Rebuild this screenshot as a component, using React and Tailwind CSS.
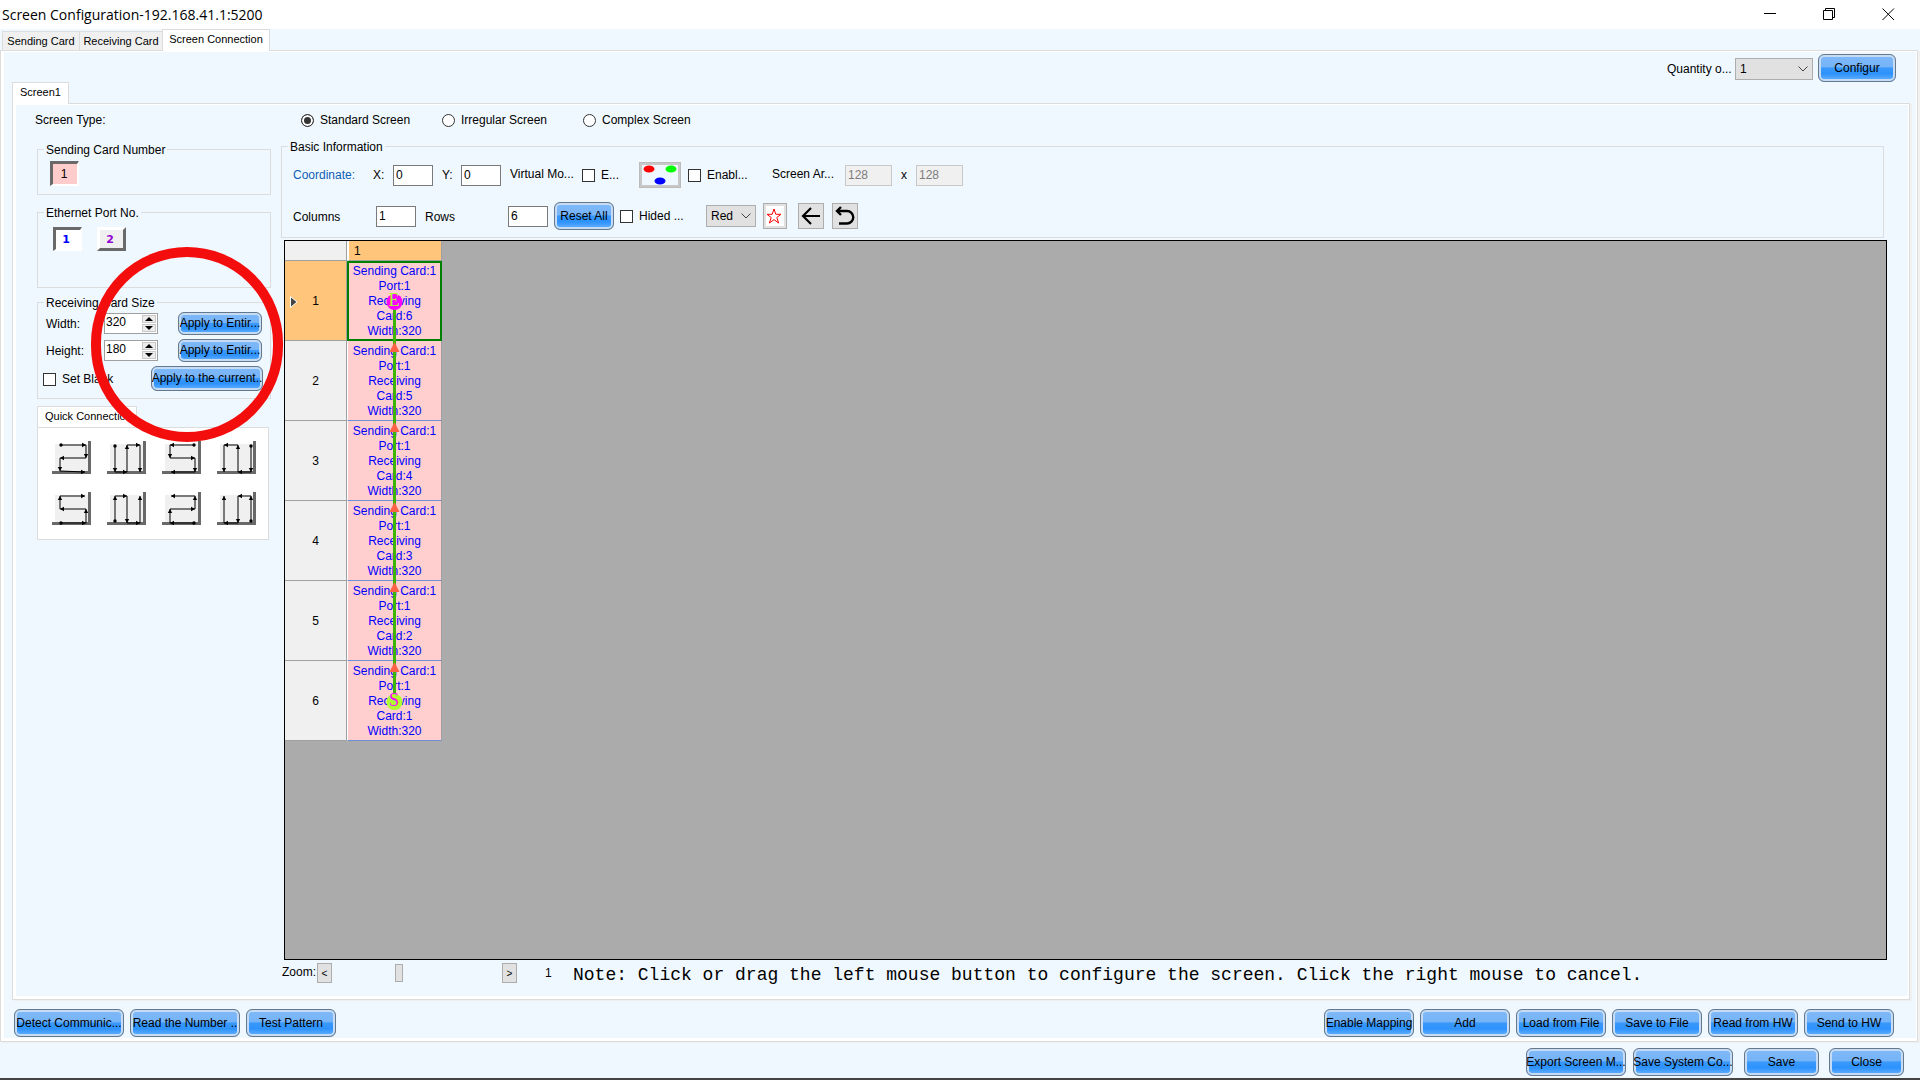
import React, { useState } from "react";
import { clsx } from "clsx";

const receivingCards = [6, 5, 4, 3, 2, 1];

// Each route starts at the dot, every following point ends in an arrow head
const quickRoutes = [
  { name: "Right, then down", points: [[9, 4], [34, 4], [34, 17], [8, 17], [8, 30], [33, 31]] },
  { name: "Down, then right", points: [[8, 5], [8, 31], [20, 31], [20, 4], [33, 4], [33, 31]] },
  { name: "Left, then down", points: [[32, 4], [8, 4], [8, 17], [33, 17], [33, 31], [9, 31]] },
  { name: "Down, then left", points: [[34, 5], [34, 31], [21, 31], [21, 4], [7, 4], [7, 31]] },
  { name: "Right, then up", points: [[9, 31], [34, 31], [34, 17], [8, 17], [8, 4], [33, 4]] },
  { name: "Up, then right", points: [[8, 29], [8, 4], [20, 4], [20, 31], [33, 31], [33, 4]] },
  { name: "Left, then up", points: [[32, 31], [8, 31], [8, 17], [33, 17], [33, 4], [9, 4]] },
  { name: "Up, then left", points: [[34, 29], [34, 4], [21, 4], [21, 31], [7, 31], [7, 4]] },
];

const GlossButton = ({ className, children }) => (
  <button
    type="button"
    className={clsx(
      "shrink-0 flex items-center justify-center overflow-hidden whitespace-nowrap rounded-[6px] border border-[#66788c] bg-[linear-gradient(#7fb9f8_0%,#76b4f8_45%,#3a99fb_50%,#2d92fd_72%,#6ab3ff_100%)] shadow-[inset_0_0_0_2px_#c6dcf4] text-black",
      className
    )}
  >
    {children}
  </button>
);

const TextBox = ({ className, ...props }) => (
  <input
    type="text"
    className={clsx(
      "h-[21px] shrink-0 border border-[#7a7a7a] bg-white px-[2px] pb-px text-[12px] text-black disabled:border-[#c8c8c8] disabled:bg-[#f0f0f0] disabled:text-[#7c7c7c]",
      className
    )}
    {...props}
  />
);

const CheckBox = ({ label, className }) => (
  <label className={clsx("flex shrink-0 items-center gap-[6px]", className)}>
    <input type="checkbox" className="size-[13px] shrink-0 appearance-none border border-[#333] bg-white checked:bg-[#333]" />
    {label}
  </label>
);

const Select = ({ className, options, ...props }) => (
  <div className={clsx("relative h-[22px] shrink-0", className)}>
    <select className="h-full w-full appearance-none border border-[#adadad] bg-[#e1e1e1] pl-1 text-[12px] text-black" {...props}>
      {options.map((o) => (
        <option key={o}>{o}</option>
      ))}
    </select>
    <svg className="pointer-events-none absolute right-[5px] top-2" width="10" height="6" viewBox="0 0 10 6" fill="none" stroke="#444">
      <path d="M0.5 0.5 L5 5 L9.5 0.5" />
    </svg>
  </div>
);

const Group = ({ title, className, legendClass, children }) => (
  <fieldset className={clsx("min-w-0 border border-[#dcdcdc]", className)}>
    <legend className={clsx("h-4 px-[2px] leading-[18px]", legendClass)}>{title}</legend>
    {children}
  </fieldset>
);

const SizeField = ({ id, label, value }) => {
  const [size, setSize] = useState(value);
  return (
    <div className="flex items-center">
      <label htmlFor={id} className="w-[58px] pt-[2px]">{label}</label>
      <div className="flex h-[21px] w-[54px] border border-[#a0a0a0] bg-white">
        <input
          id={id}
          type="text"
          value={size}
          onChange={(e) => setSize(Number(e.target.value) || 0)}
          className="w-[37px] pb-[2px] pl-[1px] text-[12px]"
        />
        <div className="flex flex-1 flex-col gap-px py-px pr-px">
          <button type="button" aria-label={`Increase ${label}`} onClick={() => setSize(size + 1)} className="flex flex-1 items-center justify-center border border-[#c8c8c8] bg-[#ececec]">
            <svg className="shrink-0" width="8" height="4" viewBox="0 0 8 4"><path d="M0 4 L4 0 L8 4Z" /></svg>
          </button>
          <button type="button" aria-label={`Decrease ${label}`} onClick={() => setSize(size - 1)} className="flex flex-1 items-center justify-center border border-[#c8c8c8] bg-[#ececec]">
            <svg className="shrink-0" width="8" height="4" viewBox="0 0 8 4"><path d="M0 0 L4 4 L8 0Z" /></svg>
          </button>
        </div>
      </div>
      <GlossButton className="ml-5 h-[23px] w-[84px]">Apply to Entir...</GlossButton>
    </div>
  );
};

const RouteIcon = ({ points }) => {
  const arrows = points.slice(1).map(([x, y], i) => {
    const [px, py] = points[i];
    const dx = Math.sign(x - px);
    const dy = Math.abs(x - px) > Math.abs(y - py) ? 0 : Math.sign(y - py);
    const angle = dy === 0 ? (dx > 0 ? 0 : 180) : dy > 0 ? 90 : 270;
    return <path key={i} d="M0 0 L-4 -2.2 L-4 2.2Z" transform={`translate(${x} ${y}) rotate(${angle})`} />;
  });
  return (
    <svg width="39" height="33" viewBox="0 0 39 33">
      <rect x="3" y="3" width="33" height="27" fill="#f0f0f0" />
      <path d="M36 0H39V33H0V30H36Z" fill="#696969" />
      <polyline points={points.map((p) => p.join(",")).join(" ")} fill="none" stroke="#000" />
      <circle cx={points[0][0]} cy={points[0][1]} r="1.7" />
      {arrows}
    </svg>
  );
};

const ScreenGrid = () => (
  <div className="relative w-[157px]">
    <table className="w-full table-fixed border-separate border-spacing-0 text-center">
      <thead>
        <tr className="h-5">
          <th aria-label="Row" className="w-[62px] border-b border-r border-[#a0a0a0] bg-[#f0f0f0] p-0" />
          <th className="border-b border-r border-[#a0a0a0] border-l-2 border-l-white bg-[#ffc57a] p-0 pl-[5px] pt-[2px] text-left font-normal">1</th>
        </tr>
      </thead>
      <tbody>
        {receivingCards.map((card, i) => (
          <tr key={card} className="h-20">
            <th
              className={clsx(
                "border-b border-r border-[#a0a0a0] p-0 pt-[2px] font-normal",
                i === 0 ? "bg-[#ffc57a]" : "bg-[#f0f0f0]"
              )}
            >
              <div className="grid grid-cols-[12px_1fr_12px] items-center">
                {i === 0 ? (
                  <svg className="ml-[5px]" width="8" height="12" viewBox="0 0 8 12">
                    <path d="M0.5 0.5 L7 6 L0.5 11.5Z" fill="#444" stroke="#fff" />
                  </svg>
                ) : <span />}
                <span>{i + 1}</span>
              </div>
            </th>
            <td
              className={clsx(
                "bg-[#ffcece] p-0 leading-[15px] text-[#0000ff]",
                i === 0 ? "border-2 border-[#008000]" : "border-b border-l border-r border-b-[#6f8fd0] border-l-white border-r-[#a0a0a0] pt-[2px]"
              )}
            >
              Sending Card:1<br />Port:1<br />Receiving<br />Card:{card}<br />Width:320
            </td>
          </tr>
        ))}
      </tbody>
    </table>
    {/* Signal route from the start card up to the end card */}
    <svg className="pointer-events-none absolute left-0 top-0" width="157" height="500" viewBox="0 0 157 500">
      <rect x="108" y="60" width="3" height="394" fill="#3cb400" />
      {[101, 181, 261, 341, 421].map((y) => (
        <path key={y} d={`M109.5 ${y} L114.5 ${y + 10} H104.5Z`} fill="#ff6347" />
      ))}
      <circle cx="109.5" cy="61" r="8" fill="#ff00ff" />
      <text x="109" y="65" textAnchor="middle" fontSize="18" fontFamily="Liberation Serif, serif" fill="#adff2f">E</text>
      <circle cx="109.5" cy="461" r="8" fill="#adff2f" />
      <text x="109" y="465" textAnchor="middle" fontSize="18" fontFamily="Liberation Serif, serif" fill="#ff00ff">S</text>
    </svg>
  </div>
);

const LeftPanel = () => (
  <div className="relative w-[234px] shrink-0">
    <p className="mt-2 -ml-[2px] leading-[15px]">Screen Type:</p>

    <Group title="Sending Card Number" className="mt-[13px] h-[54px]" legendClass="ml-[6px]">
      <button type="button" className="ml-3 mt-1 h-[25px] w-[29px] border-[3px] border-b-2 border-r-2 border-[#696969] border-b-white border-r-white bg-[#ffcccc] pr-[2px]">1</button>
    </Group>

    <Group title="Ethernet Port No." className="mt-[9px] h-[84px]" legendClass="ml-[6px]">
      <div className="ml-[15px] mt-[7px] flex gap-[15px] font-['DejaVu_Sans',sans-serif] text-[11px] font-bold">
        <button type="button" className="h-6 w-[29px] border-[3px] border-b-2 border-r-2 border-[#696969] border-b-white border-r-white bg-white pr-1 text-[#0000ff]">1</button>
        <button type="button" className="h-6 w-[29px] border-[3px] border-white border-b-[#696969] border-r-[#696969] bg-[#f0f0f0] pr-[3px] text-[#9400d3]">2</button>
      </div>
    </Group>

    <Group title="Receiving Card Size" className="mt-[6px] h-[105px]" legendClass="ml-[6px]">
      <div className="ml-2 mt-[2px] flex flex-col gap-1">
        <SizeField id="card-width" label="Width:" value={320} />
        <SizeField id="card-height" label="Height:" value={180} />
      </div>
      <div className="ml-[5px] mr-[7px] mt-1 flex items-center justify-between">
        <CheckBox label="Set Blank" className="pt-[2px]" />
        <GlossButton className="h-[25px] w-[112px]">Apply to the current..</GlossButton>
      </div>
    </Group>

    <div className="mt-[7px] w-[232px]">
      <div role="tablist">
        <button type="button" role="tab" className="-mb-px block h-[22px] w-[100px] border border-b-0 border-[#dcdcdc] bg-white pb-[2px] pl-[7px] text-left text-[11px]">Quick Connection</button>
      </div>
      <div className="grid grid-cols-4 gap-x-4 gap-y-[18px] border border-[#dcdcdc] bg-white pb-[14px] pl-[14px] pr-3 pt-[13px]">
        {quickRoutes.map((route) => (
          <button key={route.name} type="button" aria-label={route.name}>
            <RouteIcon points={route.points} />
          </button>
        ))}
      </div>
    </div>

    {/* Highlight ring around the card size controls */}
    <div className="pointer-events-none absolute left-[54px] top-[142px] h-[195px] w-[192px] rounded-full border-[10px] border-[#f40d0d]" />
  </div>
);

const ScreenTypes = () => (
  <div className="mt-[7px] flex h-4 items-center pl-5">
    {["Standard Screen", "Irregular Screen", "Complex Screen"].map((type, i) => (
      <label key={type} className="flex w-[141px] items-center gap-[6px]">
        <input
          type="radio"
          name="screen-type"
          defaultChecked={i === 0}
          className="size-[13px] appearance-none rounded-full border border-[#333] bg-white checked:bg-[#333] checked:shadow-[inset_0_0_0_2px_#fff]"
        />
        {type}
      </label>
    ))}
  </div>
);

const BasicInformation = () => (
  <Group title="Basic Information" className="mr-[3px] mt-[10px] h-[100px]" legendClass="ml-[6px]">
    <div className="mt-2 flex h-[26px] items-center pl-[11px]">
      <span className="w-20 text-[#0f5fb5]">Coordinate:</span>
      <label htmlFor="coord-x" className="w-5">X:</label>
      <TextBox id="coord-x" defaultValue="0" className="w-10" />
      <label htmlFor="coord-y" className="ml-[9px] w-[19px]">Y:</label>
      <TextBox id="coord-y" defaultValue="0" className="w-10" />
      <span className="ml-[9px] w-[72px] pb-[2px]">Virtual Mo...</span>
      <CheckBox label="E..." className="w-[57px]" />
      <button type="button" aria-label="Virtual pixel layout" className="h-[26px] w-[42px] border border-[#bbb] bg-[#c8c8c8] p-[2px]">
        <svg width="36" height="20" viewBox="0 0 36 20">
          <rect width="36" height="20" fill="#f0f8ff" />
          <ellipse cx="7" cy="4" rx="5.5" ry="3.5" fill="#f00" />
          <ellipse cx="29" cy="4" rx="5.5" ry="3.5" fill="#0f0" />
          <ellipse cx="18" cy="16" rx="5.5" ry="3.5" fill="#00f" />
        </svg>
      </button>
      <CheckBox label="Enabl..." className="ml-[7px] w-[84px]" />
      <label htmlFor="area-width" className="w-[73px] pb-[2px]">Screen Ar...</label>
      <TextBox id="area-width" defaultValue="128" disabled className="w-[47px]" />
      <label htmlFor="area-height" className="w-6 text-center">x</label>
      <TextBox id="area-height" defaultValue="128" disabled className="w-[47px]" />
    </div>
    <div className="mt-[14px] flex h-7 items-center pl-[11px]">
      <label htmlFor="columns" className="w-[83px] pt-[2px]">Columns</label>
      <TextBox id="columns" defaultValue="1" className="w-10" />
      <label htmlFor="rows" className="ml-[9px] w-[83px] pt-[2px]">Rows</label>
      <TextBox id="rows" defaultValue="6" className="w-10" />
      <GlossButton className="ml-[6px] h-7 w-[60px]">Reset All</GlossButton>
      <CheckBox label="Hided ..." className="ml-[6px] w-[86px]" />
      <Select options={["Red"]} aria-label="Line colour" className="w-[50px]" />
      <button type="button" aria-label="Favourite" className="ml-[7px] flex h-[26px] w-6 items-center justify-center border border-[#adadad] bg-white shadow-[inset_0_0_0_2px_#e1e1e1]">
        <svg className="mr-[2px] shrink-0" width="16" height="16" viewBox="0 0 16 16" fill="none" stroke="#f00">
          <path d="M8 1 L9.8 6.3 H15 L10.8 9.5 L12.6 15 L8 11.6 L3.4 15 L5.2 9.5 L1 6.3 H6.2Z" />
        </svg>
      </button>
      <button type="button" aria-label="Back" className="ml-[11px] flex h-[26px] w-[26px] items-center justify-center border border-[#adadad] bg-[#e1e1e1]">
        <svg width="20" height="18" viewBox="0 0 20 18" fill="none" stroke="#000" strokeWidth="2.2">
          <path d="M19 9 H2 M10 1 L2 9 L10 17" />
        </svg>
      </button>
      <button type="button" aria-label="Undo" className="ml-2 flex h-[26px] w-[26px] items-center justify-center border border-[#adadad] bg-[#e1e1e1]">
        <svg width="20" height="20" viewBox="0 0 20 20" fill="none" stroke="#000" strokeWidth="2.4">
          <path d="M2 5 H12 A6.2 6.2 0 0 1 12 17.5 H4 M6 1 L2 5 L6 9" />
        </svg>
      </button>
    </div>
  </Group>
);

const ZoomBar = () => (
  <div className="mb-[13px] mt-[3px] flex h-5 items-center">
    <label htmlFor="zoom" className="w-9 shrink-0 pb-[2px] pl-px">Zoom:</label>
    <button type="button" aria-label="Zoom out" className="h-5 w-[15px] shrink-0 border border-[#adadad] bg-[#e1e1e1] text-[10px]">&lt;</button>
    <input
      id="zoom"
      type="range"
      min="0"
      max="100"
      defaultValue="39"
      className="h-5 w-[170px] shrink-0 appearance-none bg-transparent [&::-webkit-slider-thumb]:h-[18px] [&::-webkit-slider-thumb]:w-2 [&::-webkit-slider-thumb]:appearance-none [&::-webkit-slider-thumb]:border [&::-webkit-slider-thumb]:border-[#adadad] [&::-webkit-slider-thumb]:bg-[#e1e1e1]"
    />
    <button type="button" aria-label="Zoom in" className="h-5 w-[15px] shrink-0 border border-[#adadad] bg-[#e1e1e1] text-[10px]">&gt;</button>
    <output htmlFor="zoom" className="ml-7 w-7 shrink-0">1</output>
    <p className="whitespace-nowrap pt-1 font-['Liberation_Mono',monospace] text-[18px] leading-5">
      Note: Click or drag the left mouse button to configure the screen. Click the right mouse to cancel.
    </p>
  </div>
);

export default function App() {
  return (
    <div className="flex min-h-screen w-full flex-col bg-[#f0f8ff] font-['Liberation_Sans',Arial,sans-serif] text-[12px] leading-[15px] text-black">
      {/* Title bar */}
      <header className="flex h-[29px] items-center justify-between bg-white pl-[2px] pr-[25px]">
        <h1 className="font-['Open_Sans',sans-serif] text-[14px]">Screen Configuration-192.168.41.1:5200</h1>
        <div className="flex gap-[46px]">
          <button type="button" aria-label="Minimize">
            <svg width="13" height="13" viewBox="0 0 13 13" stroke="#000"><path d="M0 5.5 H12" /></svg>
          </button>
          <button type="button" aria-label="Restore">
            <svg width="13" height="13" viewBox="0 0 13 13" fill="none" stroke="#000"><path d="M0.5 2.5 H9.5 V11.5 H0.5Z M2.5 2.5 V0.5 H11.5 V9.5 H9.5" /></svg>
          </button>
          <button type="button" aria-label="Close window">
            <svg width="13" height="13" viewBox="0 0 13 13" stroke="#000"><path d="M0.5 0.5 L12 12 M12 0.5 L0.5 12" /></svg>
          </button>
        </div>
      </header>

      <div role="tablist" className="z-10 -mb-px flex h-[22px] items-end pl-[2px] text-[11px]">
        <button type="button" role="tab" className="h-5 w-[77px] border border-r-0 border-[#dcdcdc] bg-[#f0f0f0]">Sending Card</button>
        <button type="button" role="tab" className="h-5 w-[83px] border border-r-0 border-[#dcdcdc] bg-[#f0f0f0]">Receiving Card</button>
        <button type="button" role="tab" aria-selected="true" className="h-[22px] w-[108px] border border-b-0 border-[#dcdcdc] bg-white pb-[2px]">Screen Connection</button>
      </div>

      <div className="mr-[2px] flex flex-1 flex-col border border-[#dcdcdc] bg-white pb-[3px] pl-[3px] pr-px pt-px shadow-[2px_1px_0_#f0f0f0]">
        <div className="flex flex-1 flex-col bg-[#f0f8ff]">
          <div className="flex h-[30px] items-center justify-end pr-5 pt-[2px]">
            <label htmlFor="quantity" className="w-[68px] pt-[3px]">Quantity o...</label>
            <Select id="quantity" options={["1"]} className="mt-[2px] w-[78px]" />
            <GlossButton className="ml-[5px] h-7 w-[78px]">Configur</GlossButton>
          </div>

          <div role="tablist" className="z-10 -mb-px pl-2">
            <button type="button" role="tab" aria-selected="true" className="block h-[22px] w-[57px] border border-b-0 border-[#dcdcdc] bg-white pb-[2px] text-[11px]">Screen1</button>
          </div>

          <div className="ml-2 mr-[6px] flex flex-1 flex-col border border-[#dcdcdc] bg-white pb-[3px] pl-[3px] pr-px pt-px shadow-[2px_1px_0_#f0f0f0]">
            <div className="flex flex-1 gap-[10px] bg-[#f0f8ff] pl-[21px] pr-[21px]">
              <LeftPanel />
              <main className="flex min-w-0 flex-1 flex-col">
                <ScreenTypes />
                <BasicInformation />
                <div className="ml-[3px] mt-[2px] flex-1 border border-black bg-[#ababab]">
                  <ScreenGrid />
                </div>
                <ZoomBar />
              </main>
            </div>
          </div>

          <div className="mb-px mt-[9px] flex justify-between pl-[10px] pr-[22px]">
            <div className="flex gap-[6px]">
              <GlossButton className="h-7 w-[110px]">Detect Communic...</GlossButton>
              <GlossButton className="h-7 w-[110px]">Read the Number ..</GlossButton>
              <GlossButton className="h-7 w-[90px]">Test Pattern</GlossButton>
            </div>
            <div className="flex gap-[6px]">
              {["Enable Mapping", "Add", "Load from File", "Save to File", "Read from HW", "Send to HW"].map((label) => (
                <GlossButton key={label} className="h-7 w-[90px]">{label}</GlossButton>
              ))}
            </div>
          </div>
        </div>
      </div>

      <footer className="mt-[6px] flex justify-end border-b-2 border-[#444] pb-[2px] pr-4">
        <GlossButton className="h-7 w-[100px]">Export Screen M...</GlossButton>
        <GlossButton className="ml-[7px] h-7 w-[100px]">Save System Co...</GlossButton>
        <GlossButton className="ml-[11px] h-7 w-[75px]">Save</GlossButton>
        <GlossButton className="ml-[10px] h-7 w-[75px]">Close</GlossButton>
      </footer>
    </div>
  );
}
